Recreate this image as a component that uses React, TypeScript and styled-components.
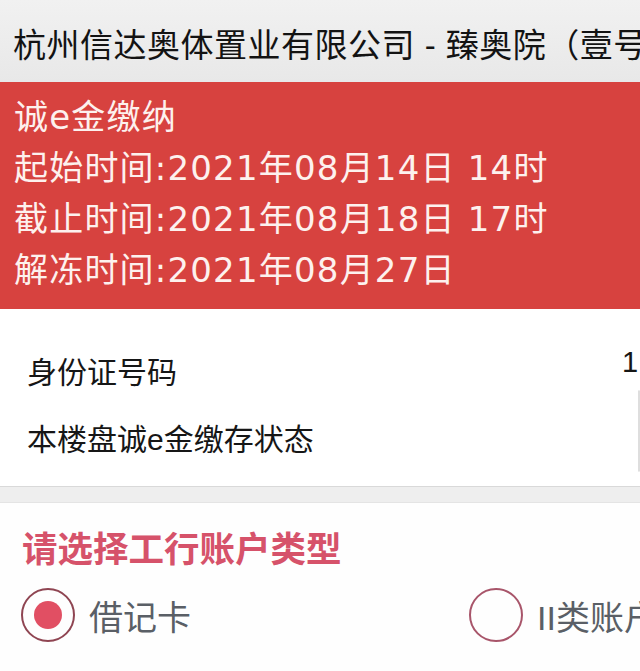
import { createGlobalStyle, styled } from 'styled-components';

const GlobalStyle = createGlobalStyle`
  html, body {
    margin: 0;
    padding: 0;
    width: 640px;
    height: 671px;
    overflow: hidden;
    background: #fff;
  }
  body {
    font-family: "Liberation Sans", "Noto Sans CJK SC", sans-serif;
    -webkit-font-smoothing: antialiased;
  }
`;

const Page = styled.main`
  width: 640px;
  height: 671px;
  overflow: hidden;
  display: flex;
  flex-direction: column;
`;

const Header = styled.header`
  flex: 0 0 82px;
  box-sizing: border-box;
  padding: 3px 0 0 13px;
  display: flex;
  align-items: center;
  background: linear-gradient(#f1f1f1, #e8e8e8);
  color: #131313;
  font-size: 33px;
  letter-spacing: 0.5px;
  white-space: nowrap;
  overflow: hidden;
`;

const Notice = styled.section`
  background: #d7423f;
  color: #fdf1ee;
  font-family: "DejaVu Sans", "Noto Sans CJK SC", sans-serif;
  font-size: 34px;
  letter-spacing: 1.2px;
  line-height: 51px;
  padding: 10px 0 13px 14px;
  white-space: nowrap;
`;

const InfoCard = styled.section`
  padding: 29px 0 20px 27px;
  background: #fff;
  overflow: hidden;
`;

const InfoRow = styled.div`
  display: grid;
  grid-template-columns: 595px 1fr;
  align-items: center;
  height: 64px;
`;

const Label = styled.span`
  font-size: 30px;
  color: #161616;
  white-space: nowrap;
`;

const Value = styled.span`
  font-size: 29px;
  letter-spacing: 4px;
  color: #161616;
  white-space: nowrap;
  margin-bottom: 16px;
`;

const StatusBox = styled.div`
  margin: -12px 0 0 16px;
  height: 80px;
  border: 1px solid #dedede;
  border-radius: 4px;
`;

const Divider = styled.div`
  flex: 0 0 auto;
  height: 15px;
  background: #eeeeee;
  border-top: 1px solid #d9d9d9;
  border-bottom: 1px solid #e4e4e4;
`;

const ChooseSection = styled.section`
  flex: 1;
  padding-top: 27px;
  background: #fefefe;
`;

const ChooseTitle = styled.h2`
  margin: 0;
  padding-left: 22px;
  font-size: 35.5px;
  font-weight: 600;
  line-height: 40px;
  color: #d6526a;
  white-space: nowrap;
`;

const RadioGroup = styled.div`
  display: grid;
  grid-template-columns: 448px 1fr;
  padding: 18px 0 0 21px;
  overflow: hidden;
`;

const Option = styled.label`
  display: flex;
  align-items: center;
  gap: 14px;
  white-space: nowrap;
`;

const Circle = styled.span<{ $checked?: boolean }>`
  flex: 0 0 auto;
  width: 54px;
  height: 54px;
  box-sizing: border-box;
  border-radius: 50%;
  border: 2px solid ${(p) => (p.$checked ? '#8f4552' : '#a8556a')};
  display: flex;
  align-items: center;
  justify-content: center;
  &::after {
    content: '';
    display: ${(p) => (p.$checked ? 'block' : 'none')};
    width: 28px;
    height: 28px;
    border-radius: 50%;
    background: #e14f63;
  }
`;

const OptionText = styled.span`
  font-size: 34px;
  color: #5a5f66;
`;

const lines = [
  '诚e金缴纳',
  '起始时间:2021年08月14日 14时',
  '截止时间:2021年08月18日 17时',
  '解冻时间:2021年08月27日',
];

function App() {
  return (
    <>
      <GlobalStyle />
      <Page>
        <Header>杭州信达奥体置业有限公司 - 臻奥院（壹号地块）</Header>
        <Notice>
          {lines.map((line) => (
            <div key={line}>{line}</div>
          ))}
        </Notice>
        <InfoCard>
          <InfoRow>
            <Label>身份证号码</Label>
            <Value>1301**********1234</Value>
          </InfoRow>
          <InfoRow>
            <Label>本楼盘诚e金缴存状态</Label>
            <StatusBox />
          </InfoRow>
        </InfoCard>
        <Divider />
        <ChooseSection>
          <ChooseTitle>请选择工行账户类型</ChooseTitle>
          <RadioGroup>
            <Option>
              <Circle $checked />
              <OptionText>借记卡</OptionText>
            </Option>
            <Option>
              <Circle />
              <OptionText>II类账户</OptionText>
            </Option>
          </RadioGroup>
        </ChooseSection>
      </Page>
    </>
  );
}

export default App;
